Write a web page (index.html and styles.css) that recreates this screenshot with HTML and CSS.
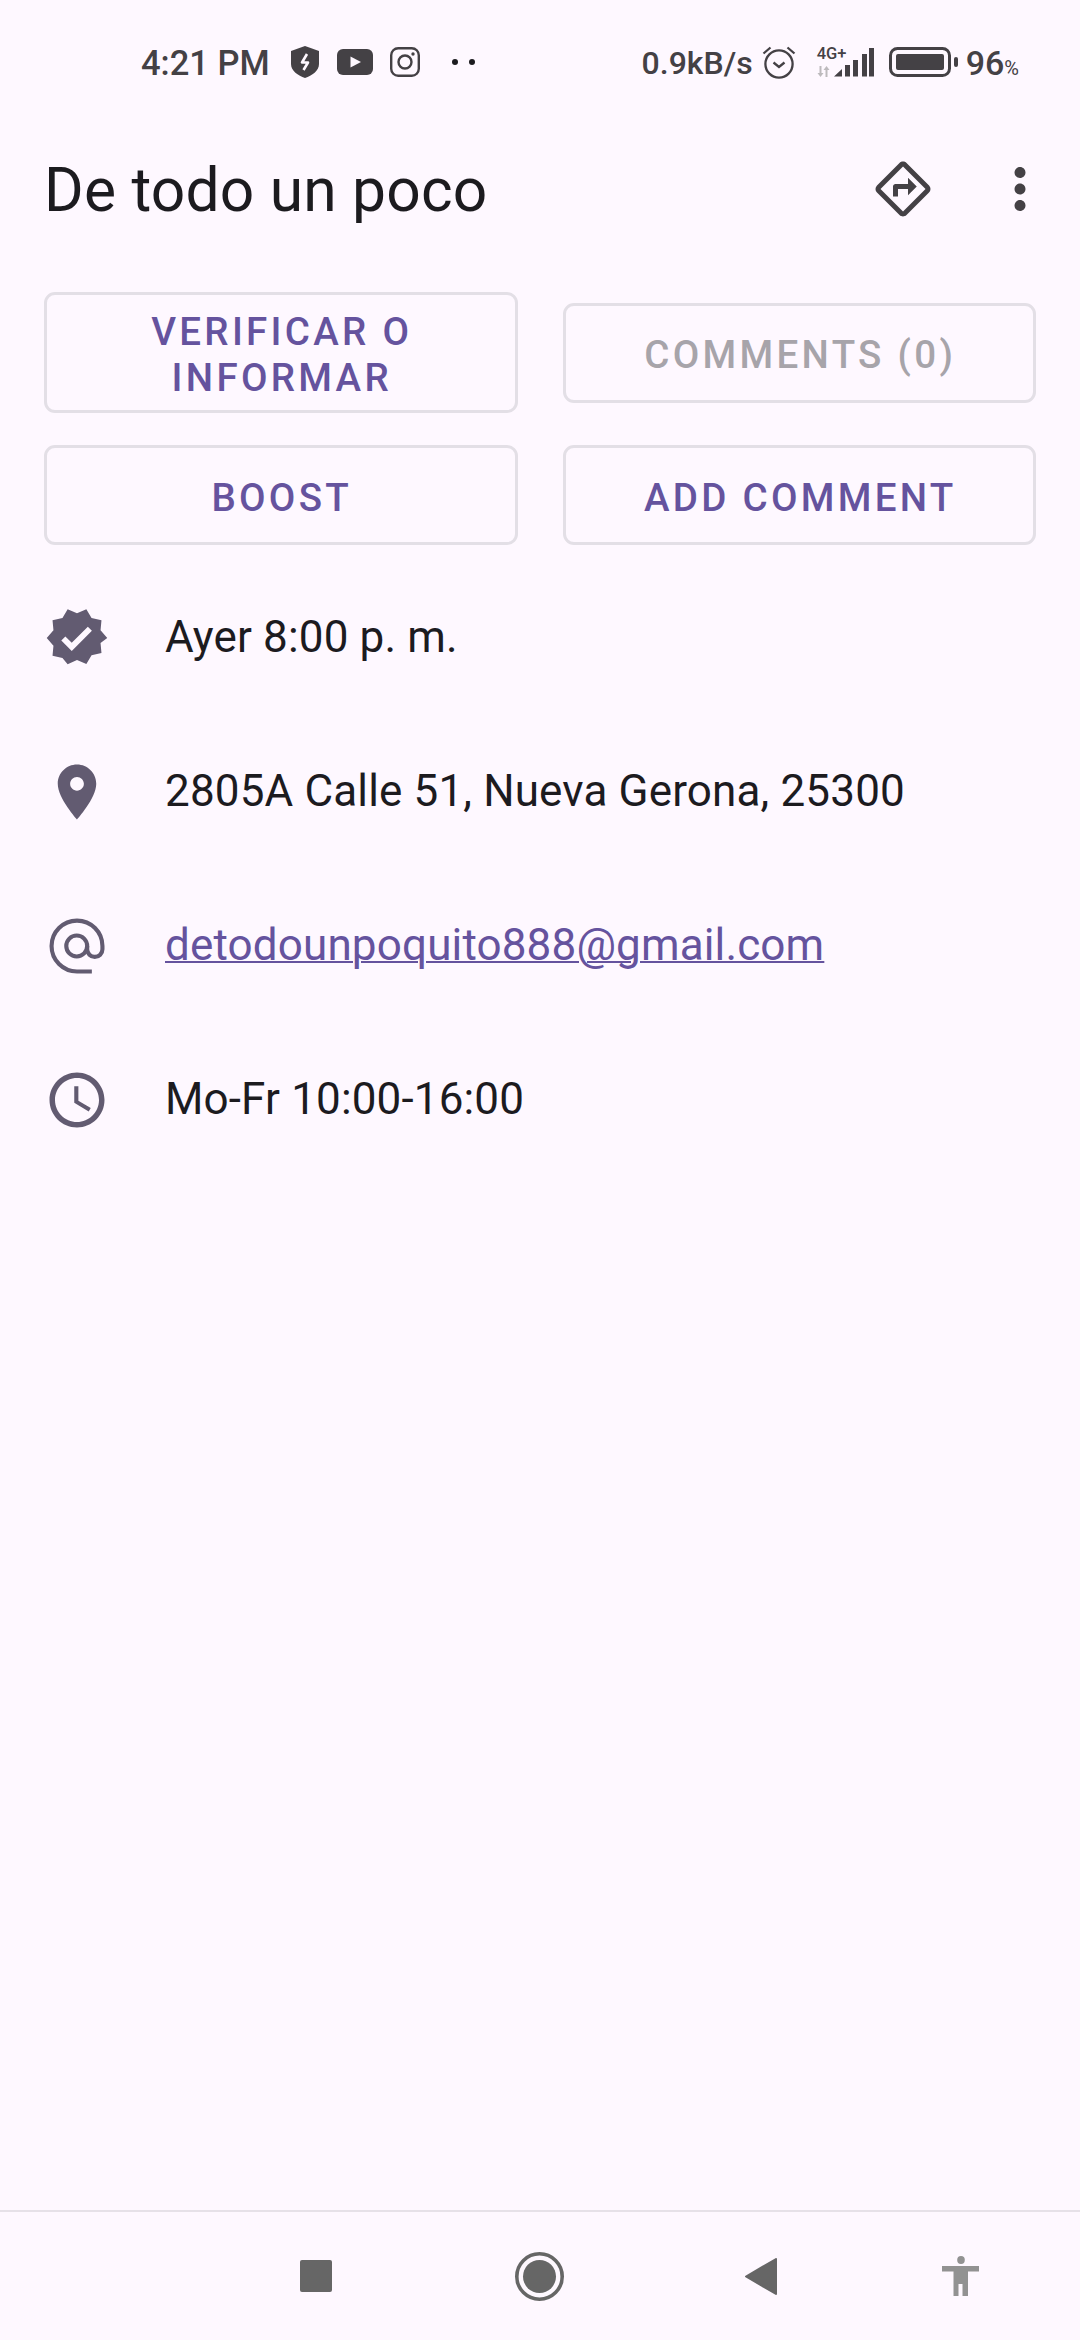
FILE: index.html
```html
<!DOCTYPE html>
<html lang="es">
<head>
  <meta charset="UTF-8" />
  <meta name="viewport" content="width=device-width, initial-scale=1.0"/>
  <title>De todo un poco</title>
  <link rel="stylesheet" href="styles.css">
</head>
<body>

<div class="page">

  <div class="status">
    <div class="status-left">
      <span class="clock">4:21 PM</span>
      <svg class="st-shield" width="28" height="32" viewBox="0 0 28 32">
        <path fill="#444145" d="M14 0L28 5V18C28 25 21 29.500 14 32C7 29.500 0 25 0 18V5Z"/>
        <path fill="none" stroke="#fef8ff" stroke-width="2.600" stroke-linejoin="round" d="M16 8L11 16.500H17L12.500 24"/>
      </svg>
      <svg class="st-yt" width="36" height="26" viewBox="0 0 36 26">
        <rect width="36" height="26" rx="6" fill="#444145"/>
        <path fill="#fef8ff" d="M13.500 7.500L24 13L13.500 18.500Z"/>
      </svg>
      <svg class="st-ig" width="30" height="30" viewBox="0 0 30 30">
        <rect x="1.200" y="1.200" width="27.600" height="27.600" rx="7" fill="none" stroke="#444145" stroke-width="2.400"/>
        <circle cx="15" cy="15" r="6.500" fill="none" stroke="#444145" stroke-width="2.400"/>
        <circle cx="23" cy="7" r="1.700" fill="#444145"/>
      </svg>
      <svg class="st-dots" width="23" height="6" viewBox="0 0 23 6">
        <circle cx="3" cy="3" r="3" fill="#1c1b1f"/>
        <circle cx="20" cy="3" r="3" fill="#1c1b1f"/>
      </svg>
    </div>
    <div class="status-right">
      <span class="speed">0.9kB/s</span>
      <svg class="st-alarm" width="34" height="34" viewBox="0 0 34 34">
        <circle cx="17" cy="19" r="13.600" fill="none" stroke="#444145" stroke-width="2.300"/>
        <path fill="none" stroke="#444145" stroke-width="2.300" d="M11.500 17.500L17 22L22.500 17.500M1.500 8.500L8.500 2.500M32.500 8.500L25.500 2.500"/>
      </svg>
      <div class="st-net">
        <span class="net-label">4G+</span>
        <svg class="net-arrows" width="13" height="11" viewBox="0 0 13 11">
          <path fill="#bdbabd" d="M2.500 0H4.500V7H6.500L3.500 11L0.500 7H2.500ZM8.500 11H10.500V4H12.500L9.500 0L6.500 4H8.500Z"/>
        </svg>
      </div>
      <svg class="st-signal" width="40" height="29" viewBox="0 0 40 29">
        <path fill="#444145" d="M0 28.500L8 21V28.500ZM11 28.500V17H16V28.500ZM19 28.500V12H24V28.500ZM28 28.500V6H33V28.500ZM35 28.500V0H40V28.500Z"/>
      </svg>
      <svg class="st-battery" width="69" height="30" viewBox="0 0 69 30">
        <rect x="1.500" y="1.500" width="59" height="27" rx="7" fill="none" stroke="#444145" stroke-width="3"/>
        <rect x="7" y="7" width="48" height="16" rx="2" fill="#444145"/>
        <rect x="65" y="10" width="4" height="10" rx="2" fill="#444145"/>
      </svg>
      <span class="level">96<small>%</small></span>
    </div>
  </div>

  <header class="toolbar">
    <h1>De todo un poco</h1>
    <div class="toolbar-actions">
      <svg class="icon dark" viewBox="0 0 24 24" width="60" height="60">
        <path d="M22.430 10.590l-9.010-9.010c-.75-.75-2.070-.76-2.830 0l-9 9c-.78.78-.78 2.040 0 2.820l9 9c.39.39.9.58 1.410.58.51 0 1.020-.19 1.410-.58l8.990-8.990c.79-.76.8-2.020.03-2.820zm-10.420 10.400l-9-9 9-9 9 9-9 9zM8 11v4h2v-3h4v2.500l3.500-3.500L14 7.500V10H9c-.55 0-1 .45-1 1z"/>
      </svg>
      <svg class="icon dark" viewBox="0 0 24 24" width="66" height="66">
        <path d="M12 8c1.100 0 2-.9 2-2s-.9-2-2-2-2 .9-2 2 .9 2 2 2zm0 2c-1.100 0-2 .9-2 2s.9 2 2 2 2-.9 2-2-.9-2-2-2zm0 6c-1.100 0-2 .9-2 2s.9 2 2 2 2-.9 2-2-.9-2-2-2z"/>
      </svg>
    </div>
  </header>

  <div class="actions">
    <a class="btn">VERIFICAR O<br>INFORMAR</a>
    <a class="btn btn-off">COMMENTS (0)</a>
    <a class="btn">BOOST</a>
    <a class="btn">ADD COMMENT</a>
  </div>

  <section class="details">
    <div class="row">
      <svg class="icon" viewBox="0 0 24 24" width="66" height="66">
        <path d="M23 12l-2.440-2.790.34-3.690-3.610-.82-1.890-3.200L12 2.960 8.600 1.500 6.710 4.690 3.100 5.500l.34 3.700L1 12l2.440 2.790-.34 3.700 3.610.82L8.600 21.500l3.400-1.470 3.400 1.460 1.890-3.190 3.610-.82-.34-3.690L23 12zm-12.910 4.720l-3.800-3.810 1.480-1.480 2.320 2.330 5.850-5.870 1.480 1.480-7.330 7.350z"/>
      </svg>
      <span class="row-text">Ayer 8:00 p. m.</span>
    </div>
    <div class="row">
      <svg class="icon" viewBox="0 0 24 24" width="66" height="66">
        <path d="M12 2C8.130 2 5 5.130 5 9c0 5.250 7 13 7 13s7-7.750 7-13c0-3.870-3.130-7-7-7zm0 9.500c-1.380 0-2.500-1.120-2.500-2.500s1.120-2.500 2.500-2.500 2.500 1.120 2.500 2.500-1.120 2.500-2.500 2.500z"/>
      </svg>
      <span class="row-text">2805A Calle 51, Nueva Gerona, 25300</span>
    </div>
    <div class="row">
      <svg class="icon-line" viewBox="0 0 24 24" width="66" height="66">
        <circle cx="11.900" cy="12" r="3.800"/>
        <path d="M17.400 21.250H12A9.250 9.250 0 1 1 21.250 12V13.200A2.600 2.600 0 0 1 15.700 13.200V12"/>
      </svg>
      <a class="row-text mail">detodounpoquito888@gmail.com</a>
    </div>
    <div class="row">
      <svg class="icon" viewBox="0 0 24 24" width="66" height="66">
        <path d="M11.990 2C6.470 2 2 6.480 2 12s4.470 10 9.990 10C17.520 22 22 17.520 22 12S17.520 2 11.990 2zM12 20c-4.420 0-8-3.580-8-8s3.580-8 8-8 8 3.580 8 8-3.580 8-8 8zm.5-13H11v6l5.250 3.150.75-1.230-4.500-2.670z"/>
      </svg>
      <span class="row-text">Mo-Fr 10:00-16:00</span>
    </div>
  </section>

  <nav class="navbar">
    <svg class="nav-square" width="32" height="32" viewBox="0 0 32 32">
      <rect width="32" height="32" rx="2" fill="#666666"/>
    </svg>
    <svg class="nav-home" width="49" height="49" viewBox="0 0 49 49">
      <circle cx="24.500" cy="24.500" r="22.700" fill="none" stroke="#666666" stroke-width="3.600"/>
      <circle cx="24.500" cy="24.500" r="16.500" fill="#666666"/>
    </svg>
    <svg class="nav-back" width="32" height="37" viewBox="0 0 32 37">
      <path fill="#666666" stroke="#666666" stroke-width="2" stroke-linejoin="round" d="M31 1V36L1 18.500Z"/>
    </svg>
    <svg class="nav-person" width="37" height="40" viewBox="0 0 37 40">
      <ellipse cx="19" cy="4" rx="3.800" ry="4" fill="#929292"/>
      <path fill="#929292" d="M0 10H37V15.500H26V40H20.500V28H16.500V40H11.500V15.500H0Z"/>
    </svg>
  </nav>

</div>

</body>
</html>
```

FILE: styles.css
```css
body {
  margin: 0;
  background: #fef8ff;
  font-family: Roboto, "Noto Sans", sans-serif;
  color: #1c1b1f;
}
svg {
  display: block;
  flex: none;
}
.page {
  height: 2340px;
  display: flex;
  flex-direction: column;
  overflow: hidden;
}

/* status bar */
.status {
  height: 126px;
  box-sizing: border-box;
  padding: 0 61px 2px 141px;
  display: flex;
  justify-content: space-between;
  align-items: center;
  color: #444145;
}
.status-left, .status-right {
  display: flex;
  align-items: center;
}
.clock, .speed, .level {
  padding-top: 2px;
  font-weight: 500;
}
.clock {
  font-size: 34.500px;
}
.speed {
  font-size: 32px;
}
.st-shield { margin-left: 21px; }
.st-yt { margin-left: 18px; }
.st-ig { margin-left: 17px; }
.st-dots { margin-left: 32px; }
.st-alarm { margin-left: 9px; }
.st-net {
  margin-left: 21px;
  width: 28px;
  display: flex;
  flex-direction: column;
  gap: 6px;
}
.net-label {
  font-size: 16.500px;
  font-weight: 500;
  line-height: 13px;
}
.st-signal { margin-left: -11px; }
.st-battery { margin-left: 15px; }
.level {
  margin-left: 8px;
  font-size: 34px;
}
.level small {
  font-size: 20px;
  font-weight: 400;
}

/* title */
.toolbar {
  height: 128px;
  padding: 0 27px 0 44px;
  display: flex;
  justify-content: space-between;
  align-items: center;
}
h1 {
  margin: 0;
  font-size: 60.500px;
  font-weight: 400;
  letter-spacing: .2px;
}
.toolbar-actions {
  margin-bottom: 3px;
  display: flex;
  align-items: center;
  gap: 54px;
}
.icon {
  fill: #625b71;
}
.icon.dark {
  fill: #444145;
}
.icon-line {
  fill: none;
  stroke: #625b71;
  stroke-width: 1.500;
}

/* buttons */
.actions {
  margin-top: 38px;
  padding: 0 44px;
  display: grid;
  grid-template-columns: 1fr 1fr;
  column-gap: 45px;
  row-gap: 32px;
  align-items: center;
}
.btn {
  min-height: 100px;
  box-sizing: border-box;
  padding: 14px 19px 9px 21px;
  display: flex;
  align-items: center;
  justify-content: center;
  text-align: center;
  border: 3px solid #e3dfe6;
  border-radius: 11px;
  color: #65539e;
  font-size: 38.500px;
  font-weight: 500;
  line-height: 46px;
  letter-spacing: 3.300px;
}
.btn-off {
  color: #a7a4aa;
}

/* detail rows */
.details {
  margin-top: 16px;
  flex: 1;
  padding-left: 44px;
}
.row {
  height: 154px;
  display: flex;
  align-items: center;
  gap: 55px;
  font-size: 44px;
  letter-spacing: .15px;
}
.row-text {
  padding-bottom: 2px;
}
.mail {
  color: #65539e;
  text-decoration: underline;
  text-decoration-thickness: 2px;
}

/* navigation bar */
.navbar {
  height: 130px;
  box-sizing: border-box;
  padding-left: 300px;
  border-top: 2px solid #e6e1e8;
  display: flex;
  align-items: center;
}
.nav-home { margin-left: 183px; }
.nav-back { margin-left: 181px; }
.nav-person { margin-left: 165px; }
```
